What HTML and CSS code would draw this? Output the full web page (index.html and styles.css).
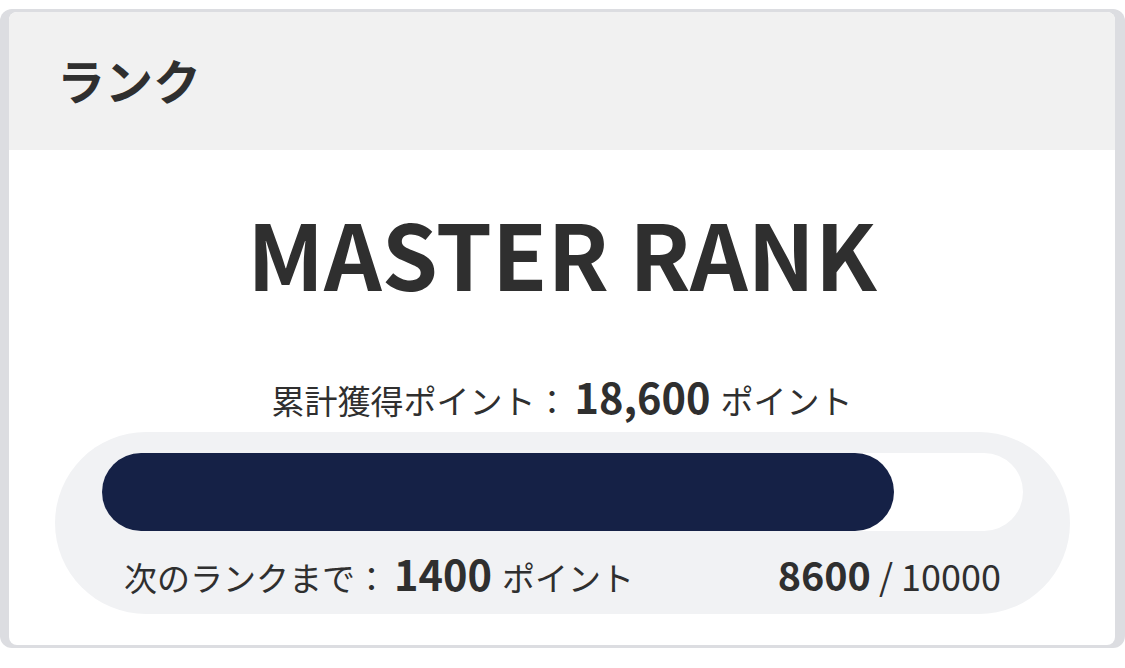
FILE: index.html
```html
<!DOCTYPE html>
<html lang="ja">
<head>
<meta charset="utf-8">
<link rel="stylesheet" href="styles.css">
</head>
<body>
<div class="card">
  <div class="inner">
    <div class="header"><h2 class="title">ランク</h2></div>
    <div class="content">
      <div class="rank">MASTER RANK</div>
      <div class="total">累計獲得ポイント：<span class="total-num">18,600</span><span class="unit">ポイント</span></div>
      <div class="pill">
        <div class="track"><div class="fill" style="width: 86%"></div></div>
        <div class="foot">
          <div class="next">次のランクまで：<span class="next-num">1400</span><span class="unit">ポイント</span></div>
          <div class="ratio"><span class="cur">8600</span> / 10000</div>
        </div>
      </div>
    </div>
  </div>
</div>
</body>
</html>
```

FILE: styles.css
```css
html, body {
  margin: 0;
  padding: 0;
  background: #ffffff;
}
body {
  font-family: "Noto Sans CJK JP", "Noto Sans", sans-serif;
  color: #2f2f2f;
}
.card {
  margin-top: 9px;
  height: 639px;
  box-sizing: border-box;
  background: #dcdde1;
  border-radius: 12px;
  padding: 3px 10px 3px 9px;
}
.inner {
  height: 100%;
  background: #ffffff;
  border-radius: 8px;
  overflow: hidden;
  display: flex;
  flex-direction: column;
}
.header {
  height: 138px;
  background: #f1f1f1;
  display: flex;
  align-items: center;
  padding-left: 48px;
  flex-shrink: 0;
}
.title {
  margin: 0 0 4px;
  font-size: 48px;
  font-weight: 700;
  line-height: 1;
}
.content {
  display: flex;
  flex-direction: column;
  align-items: center;
}
.rank {
  margin-top: 57px;
  font-size: 90px;
  font-weight: 700;
  line-height: 1;
}
.total {
  margin-top: 75px;
  font-size: 33px;
  line-height: 48px;
}
.total-num, .next-num {
  font-size: 41.5px;
  font-weight: 700;
  margin-left: 6px;
}
.unit {
  margin-left: 10px;
}
.pill {
  align-self: stretch;
  margin: 8px 45px 0 46px;
  height: 182px;
  box-sizing: border-box;
  background: #f1f2f4;
  border-radius: 91px;
  padding: 21px 47px 0;
}
.track {
  height: 78px;
  background: #ffffff;
  border-radius: 39px;
}
.fill {
  height: 100%;
  background: #152146;
  border-radius: 39px;
}
.foot {
  display: flex;
  justify-content: space-between;
  align-items: baseline;
  padding: 18px 22px 0;
  font-size: 33px;
  line-height: 48px;
}
.ratio {
  font-size: 36px;
}
.cur {
  font-size: 39.5px;
  font-weight: 700;
}
```
